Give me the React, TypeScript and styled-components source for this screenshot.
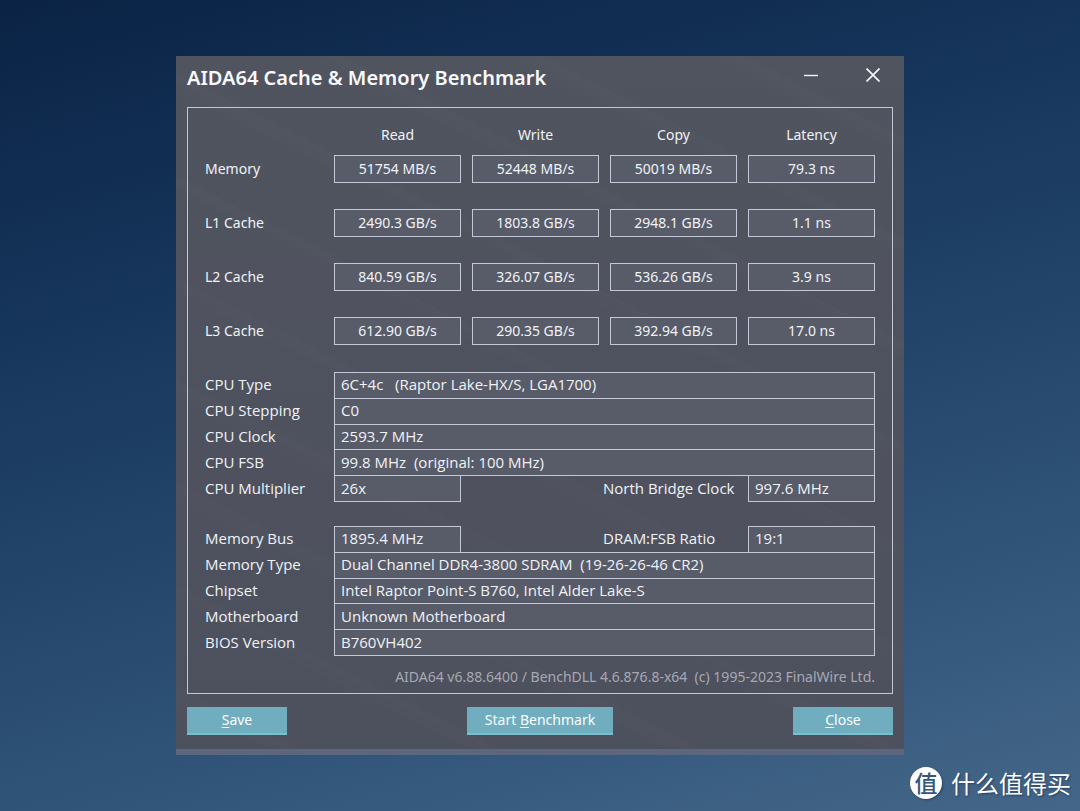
import React from "react";
import styled, { createGlobalStyle } from "styled-components";

const GlobalStyle = createGlobalStyle`
  *, *::before, *::after { box-sizing: border-box; }
  body { margin: 0; }
`;

const Desktop = styled.main`
  position: relative;
  display: flex;
  align-items: center;
  justify-content: center;
  min-height: 100vh;
  padding: 24px;
  font-family: "Noto Sans", "Open Sans", sans-serif;
  font-size: 14px;
  line-height: 20px;
  color: #f0f2f7;
  background: linear-gradient(165deg, #0a2345 0%, #143257 25%, #23466a 55%, #34587c 80%, #446789 100%);
`;

const Window = styled.section`
  display: flex;
  flex-direction: column;
  width: 100%;
  max-width: 728px;
  padding: 0 11px 14px;
  border-bottom: 6px solid #5c667e;
  background:
    repeating-linear-gradient(27deg, transparent 0 38px, rgba(255, 255, 255, 0.014) 54px, transparent 57px 91px),
    linear-gradient(180deg, #50545f, #4d505d);
`;

const TitleBar = styled.header`
  display: flex;
  align-items: flex-start;
  justify-content: space-between;
  height: 51px;
  padding-top: 8px;
`;

const Title = styled.h1`
  margin: 0;
  font-family: "Noto Sans", sans-serif;
  font-size: 20px;
  line-height: 28px;
  font-weight: 600;
  color: #f8f9fc;
`;

const WindowControls = styled.div`
  display: flex;
  gap: 38px;
  padding-right: 8px;
`;

const ControlButton = styled.button`
  display: flex;
  align-items: center;
  justify-content: center;
  width: 24px;
  height: 22px;
  padding: 0;
  border: 0;
  background: none;
  color: #f4f5fa;
`;

const Panel = styled.div`
  display: flex;
  flex-direction: column;
  padding: 16px 17px 6px;
  border: 1px solid #c3c7d8;
`;

const Table = styled.table`
  display: block;
  width: 100%;
`;

const gridColumns = "118px repeat(4, minmax(0, 1fr))";

const ResultHead = styled.thead`
  display: block;
  padding-bottom: 9px;
`;

const ResultBody = styled.tbody`
  display: flex;
  flex-direction: column;
  gap: 26px;
`;

const ResultRow = styled.tr`
  display: grid;
  grid-template-columns: ${gridColumns};
  column-gap: 11px;
  align-items: center;
`;

const ColumnHead = styled.th`
  padding: 1px 0;
  font-weight: 400;
  text-align: center;
`;

const RowHead = styled.th`
  padding: 0;
  font-weight: 400;
  text-align: left;
`;

const ResultCell = styled.td`
  padding: 3px 0;
  border: 1px solid #c3c7d8;
  background: #585c69;
  text-align: center;
`;

const InfoTable = styled(Table)`
  margin-top: 27px;
  font-family: "Open Sans", "Noto Sans", sans-serif;
  font-size: 15px;
`;

const InfoGroup = styled.tbody`
  display: grid;
  grid-auto-rows: 1fr;
  min-height: 129px;

  & + & {
    margin-top: 25px;
  }
`;

const InfoRow = styled.tr`
  display: grid;
  grid-template-columns: ${gridColumns};
  column-gap: 11px;
  align-items: stretch;
`;

const InfoLabel = styled(RowHead)`
  display: flex;
  align-items: center;
  padding-bottom: 1px;
`;

const InfoCell = styled.td<{ $wide?: boolean }>`
  display: flex;
  align-items: center;
  grid-column: ${(p) => (p.$wide ? "span 4" : "span 1")};
  margin-bottom: -1px;
  padding: 0 6px 2px;
  border: 1px solid #c3c7d8;
  background: #585c69;
  white-space: pre;
`;

const SideLabel = styled(InfoLabel)`
  justify-content: flex-end;
  grid-column: span 2;
`;

const SideLabelText = styled.span`
  width: 134px;
`;

const Version = styled.p`
  margin: 12px 0 0;
  text-align: right;
  white-space: pre;
  color: #a6a9b3;
`;

const Actions = styled.footer`
  display: flex;
  justify-content: space-between;
  padding-top: 13px;
`;

const ActionButton = styled.button<{ $wide?: boolean }>`
  width: ${(p) => (p.$wide ? 146 : 100)}px;
  height: 28px;
  padding: 0;
  border: 0;
  border-bottom: 2px solid #79c0ce;
  background: #6fadbf;
  font: inherit;
  color: #fafdff;

  u {
    text-underline-offset: 2px;
  }
`;

const Watermark = styled.div`
  position: absolute;
  right: 9px;
  bottom: 11px;
  display: flex;
  align-items: center;
  gap: 9px;
  font-family: "Noto Sans CJK SC", sans-serif;
  font-size: 24px;
  line-height: 34px;
  color: #ffffff;
  text-shadow: 1px 1px 2px rgba(20, 40, 70, 0.6);
`;

const WatermarkBadge = styled.span`
  display: flex;
  align-items: center;
  justify-content: center;
  width: 32px;
  height: 32px;
  padding-bottom: 2px;
  border-radius: 50%;
  background: #ffffff;
  box-shadow: 1px 1px 2px rgba(20, 40, 70, 0.5);
  font-size: 23px;
  font-weight: 500;
  color: #34577e;
  text-shadow: none;
`;

const columns = ["Read", "Write", "Copy", "Latency"];

const results = [
  { name: "Memory", values: ["51754 MB/s", "52448 MB/s", "50019 MB/s", "79.3 ns"] },
  { name: "L1 Cache", values: ["2490.3 GB/s", "1803.8 GB/s", "2948.1 GB/s", "1.1 ns"] },
  { name: "L2 Cache", values: ["840.59 GB/s", "326.07 GB/s", "536.26 GB/s", "3.9 ns"] },
  { name: "L3 Cache", values: ["612.90 GB/s", "290.35 GB/s", "392.94 GB/s", "17.0 ns"] },
];

type Info = { label: string; value: string; side?: { label: string; value: string } };

const infoGroups: Info[][] = [
  [
    { label: "CPU Type", value: "6C+4c   (Raptor Lake-HX/S, LGA1700)" },
    { label: "CPU Stepping", value: "C0" },
    { label: "CPU Clock", value: "2593.7 MHz" },
    { label: "CPU FSB", value: "99.8 MHz  (original: 100 MHz)" },
    { label: "CPU Multiplier", value: "26x", side: { label: "North Bridge Clock", value: "997.6 MHz" } },
  ],
  [
    { label: "Memory Bus", value: "1895.4 MHz", side: { label: "DRAM:FSB Ratio", value: "19:1" } },
    { label: "Memory Type", value: "Dual Channel DDR4-3800 SDRAM  (19-26-26-46 CR2)" },
    { label: "Chipset", value: "Intel Raptor Point-S B760, Intel Alder Lake-S" },
    { label: "Motherboard", value: "Unknown Motherboard" },
    { label: "BIOS Version", value: "B760VH402" },
  ],
];

export default function App() {
  return (
    <>
      <GlobalStyle />
      <Desktop>
        <Window>
          <TitleBar>
            <Title>AIDA64 Cache &amp; Memory Benchmark</Title>
            <WindowControls>
              <ControlButton type="button" aria-label="Minimize">
                <svg width="14" height="14" viewBox="0 0 14 14" stroke="currentColor" strokeWidth="1.4">
                  <path d="M0 7.5H14" />
                </svg>
              </ControlButton>
              <ControlButton type="button" aria-label="Close window">
                <svg width="14" height="14" viewBox="0 0 14 14" stroke="currentColor" strokeWidth="1.7">
                  <path d="M0.5 0.5L13.5 13.5M13.5 0.5L0.5 13.5" />
                </svg>
              </ControlButton>
            </WindowControls>
          </TitleBar>
          <Panel>
            <Table>
              <ResultHead>
                <ResultRow>
                  <td />
                  {columns.map((c) => (
                    <ColumnHead key={c} scope="col">{c}</ColumnHead>
                  ))}
                </ResultRow>
              </ResultHead>
              <ResultBody>
                {results.map((r) => (
                  <ResultRow key={r.name}>
                    <RowHead scope="row">{r.name}</RowHead>
                    {r.values.map((v) => (
                      <ResultCell key={v}>{v}</ResultCell>
                    ))}
                  </ResultRow>
                ))}
              </ResultBody>
            </Table>
            <InfoTable>
              {infoGroups.map((group) => (
                <InfoGroup key={group[0].label}>
                  {group.map((row) => (
                    <InfoRow key={row.label}>
                      <InfoLabel scope="row">{row.label}</InfoLabel>
                      <InfoCell $wide={!row.side}>{row.value}</InfoCell>
                      {row.side && (
                        <>
                          <SideLabel scope="row">
                            <SideLabelText>{row.side.label}</SideLabelText>
                          </SideLabel>
                          <InfoCell>{row.side.value}</InfoCell>
                        </>
                      )}
                    </InfoRow>
                  ))}
                </InfoGroup>
              ))}
            </InfoTable>
            <Version>{"AIDA64 v6.88.6400 / BenchDLL 4.6.876.8-x64  (c) 1995-2023 FinalWire Ltd."}</Version>
          </Panel>
          <Actions>
            <ActionButton type="button"><u>S</u>ave</ActionButton>
            <ActionButton type="button" $wide>Start <u>B</u>enchmark</ActionButton>
            <ActionButton type="button"><u>C</u>lose</ActionButton>
          </Actions>
        </Window>
        <Watermark>
          <WatermarkBadge>值</WatermarkBadge>
          <span>什么值得买</span>
        </Watermark>
      </Desktop>
    </>
  );
}
